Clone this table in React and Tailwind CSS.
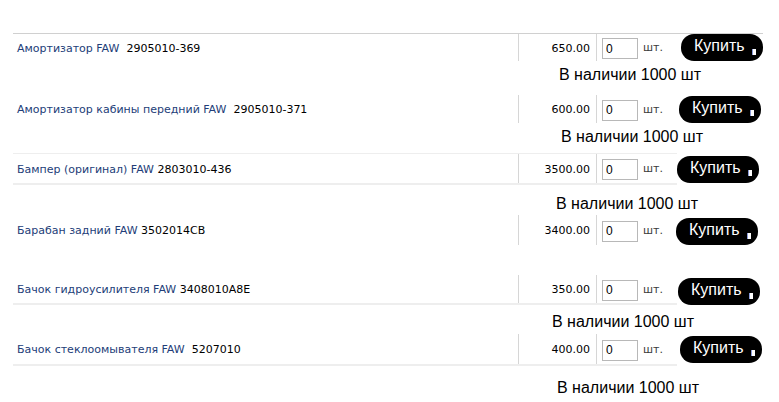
const items = [
  { name: 'Амортизатор FAW', code: '\u00a02905010-369', price: '650.00' },
  { name: 'Амортизатор кабины передний FAW', code: '\u00a02905010-371', price: '600.00' },
  { name: 'Бампер (оригинал) FAW', code: '2803010-436', price: '3500.00' },
  { name: 'Барабан задний FAW', code: '3502014CB', price: '3400.00' },
  { name: 'Бачок гидроусилителя FAW', code: '3408010A8E', price: '350.00' },
  { name: 'Бачок стеклоомывателя FAW', code: '\u00a05207010', price: '400.00' },
];

function Row({ item, className }) {
  return (
    <div className={`flex items-stretch ${className}`}>
      <div className="flex items-center w-[505px] pl-[4px] pt-[3px] text-[11px] font-['DejaVu_Sans',sans-serif] whitespace-pre">
        <span className="text-[#223d78]">{item.name}</span>
        <span className="text-black"> {item.code}</span>
      </div>
      <div className="w-px bg-[#d6d6d6]" />
      <div className="flex items-center justify-end w-[77px] pr-[6px] pt-[3px] text-[11px] text-black font-['DejaVu_Sans',sans-serif]">
        {item.price}
      </div>
      <div className="w-px bg-[#d6d6d6]" />
      <div className="flex items-center pl-[5px] pt-[2px] w-[80px]">
        <input
          defaultValue="0"
          className="w-[36px] h-[21px] border border-[#b8b8b8] px-[3px] text-[12px] text-black font-['Liberation_Sans',sans-serif] outline-none"
        />
        <span className="ml-[5px] text-[11px] text-[#3a3a3a] font-['DejaVu_Sans',sans-serif]">шт.</span>
      </div>
    </div>
  );
}

function BuyButton() {
  return (
    <div className="flex items-center h-[27px] w-[82px] rounded-[13px] bg-black pl-[13px] text-white text-[16px] leading-none font-['Liberation_Sans',sans-serif]">
      <span className="-mt-[3px]">Купить</span>
      <span className="ml-[7px] mt-[8px] w-[4px] h-[6px] bg-white border-l border-[#8a9ad8]" />
    </div>
  );
}

function Stock({ className }) {
  return (
    <div className={`h-[18px] leading-[18px] text-[16px] text-black font-['Liberation_Sans',sans-serif] ${className}`}>
      В наличии 1000 шт
    </div>
  );
}

function Line({ item, rowClass, lineClass, btnClass }) {
  return (
    <div className={`flex items-center ${lineClass}`}>
      <Row item={item} className={rowClass} />
      <div className={btnClass}>
        <BuyButton />
      </div>
    </div>
  );
}

export default function App() {
  return (
    <div className="w-[779px] h-[402px] bg-white overflow-hidden pl-[13px]">
      <div className="h-[33px]" />
      <Line item={items[0]} lineClass="w-[750px] h-[28px] border-t border-[#d0d0d0]" rowClass="h-[27px]" btnClass="ml-[4px]" />
      <Stock className="mt-[5px] ml-[546px]" />

      <Line item={items[1]} lineClass="mt-[11px] h-[28px]" rowClass="h-[28px]" btnClass="ml-[2px]" />
      <Stock className="mt-[5px] ml-[548px]" />

      <Line item={items[2]} lineClass="mt-[7px] h-[32px]" rowClass="h-[32px] border-t border-b-2 border-[#eeeeee]" btnClass="ml-[0px]" />
      <Stock className="mt-[10px] ml-[543px]" />

      <Line item={items[3]} lineClass="mt-[2px] h-[30px]" rowClass="h-[30px]" btnClass="-ml-[1px] mt-[3px]" />

      <Line item={items[4]} lineClass="mt-[30px] h-[30px]" rowClass="h-[30px] border-b-2 border-[#eeeeee]" btnClass="ml-[1px] mt-[3px]" />
      <Stock className="mt-[8px] ml-[539px]" />

      <Line item={items[5]} lineClass="mt-[3px] h-[32px]" rowClass="h-[32px] border-b-2 border-[#eeeeee]" btnClass="ml-[3px] -mt-[2px]" />
      <Stock className="mt-[13px] ml-[544px]" />
    </div>
  );
}
